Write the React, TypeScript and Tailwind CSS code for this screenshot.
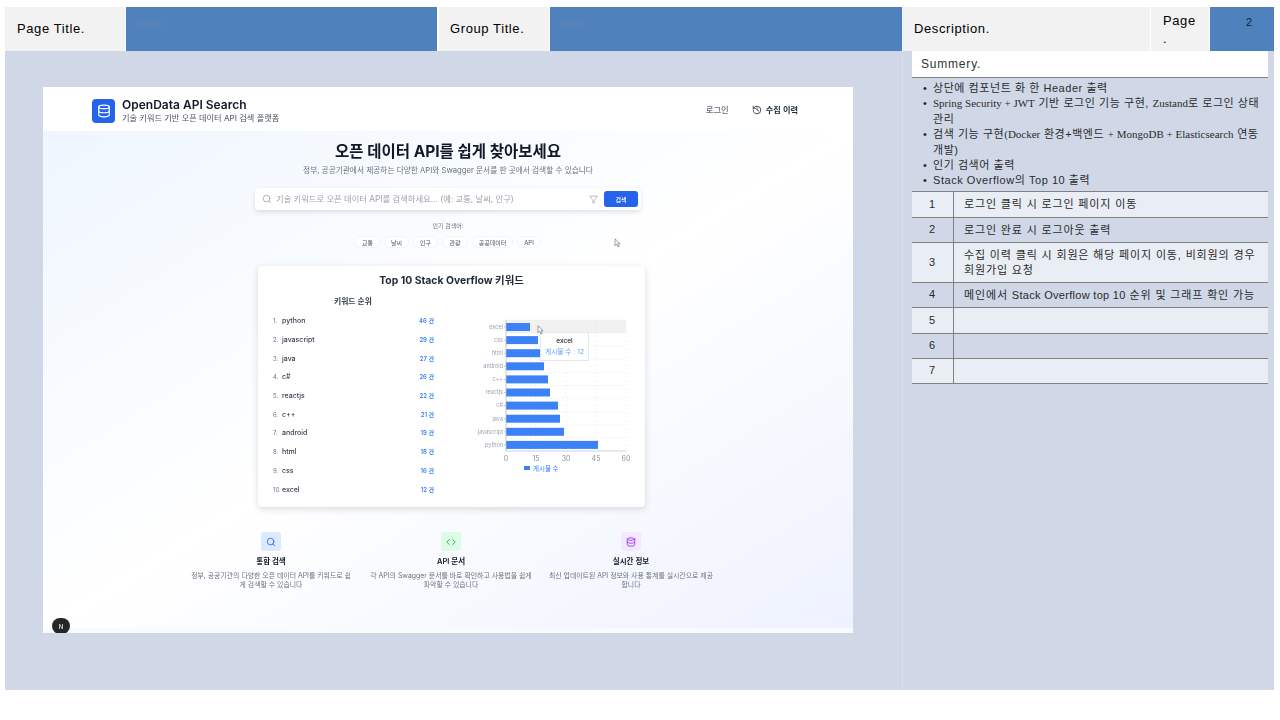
import { Database, Code, Search, History, Filter } from "lucide-react";

const sans = "font-['Liberation_Sans','Noto_Sans_CJK_KR',sans-serif]";
const ui = "font-['Inter','Noto_Sans_CJK_KR',sans-serif]";
const serif = "font-['Liberation_Serif','Noto_Sans_CJK_KR',serif] tracking-normal";

const keywords = [
  { name: "python", count: 46 },
  { name: "javascript", count: 29 },
  { name: "java", count: 27 },
  { name: "c#", count: 26 },
  { name: "reactjs", count: 22 },
  { name: "c++", count: 21 },
  { name: "android", count: 19 },
  { name: "html", count: 18 },
  { name: "css", count: 16 },
  { name: "excel", count: 12 },
];

const chips = [
  { label: "교통", width: "w-[25px]" },
  { label: "날씨", width: "w-[25px]" },
  { label: "인구", width: "w-[25px]" },
  { label: "관광", width: "w-[26px]" },
  { label: "공공데이터", width: "w-[41px]" },
  { label: "API", width: "w-[24px]" },
];

const rows = [
  { no: 1, text: "로그인 클릭 시 로그인 페이지 이동", height: "h-[26px]", bg: "bg-[#e9edf4]" },
  { no: 2, text: "로그인 완료 시 로그아웃 출력", height: "h-[25px]", bg: "bg-[#d0d8e8]" },
  { no: 3, text: "수집 이력 클릭 시 회원은 해당 페이지 이동, 비회원의 경우 회원가입 요청", height: "h-[40px]", bg: "bg-[#e9edf4]" },
  {
    no: 4,
    text: (
      <>
        메인에서 <span className="tracking-[0.3px]">Stack Overflow top 10</span> 순위 및 그래프 확인 가능
      </>
    ),
    height: "h-[25px]",
    bg: "bg-[#d0d8e8]",
  },
  { no: 5, text: "", height: "h-[26px]", bg: "bg-[#e9edf4]" },
  { no: 6, text: "", height: "h-[25px]", bg: "bg-[#d0d8e8]" },
  { no: 7, text: "", height: "h-[25px]", bg: "bg-[#e9edf4]" },
];

function Cursor({ className }: { className: string }) {
  return (
    <svg viewBox="0 0 8 12" className={className}>
      <path d="M1 1 L1 9.2 L3 7.4 L4.6 10.8 L6 10.1 L4.5 6.9 L7.2 6.8 Z" fill="white" stroke="#6b7280" strokeWidth="0.8" strokeLinejoin="round" />
    </svg>
  );
}

function StackChart() {
  const left = 36;
  const top = 4;
  const band = 13.1;
  const bars = [...keywords].reverse();
  return (
    <svg width="172" height="164" viewBox="0 0 172 164" className="block">
      <rect x={left} y={top} width="120" height={band} fill="#f1f1f1" />
      {[0, 15, 30, 45, 60].map((tick) => (
        <line key={tick} x1={left + tick * 2} x2={left + tick * 2} y1={top} y2={top + 131} stroke="#e5e7eb" strokeWidth="0.6" strokeDasharray="2 2" />
      ))}
      {bars.map((bar, i) => (
        <line key={bar.name} x1={left} x2={left + 120} y1={top + i * band} y2={top + i * band} stroke="#e5e7eb" strokeWidth="0.6" strokeDasharray="2 2" />
      ))}
      {bars.map((bar, i) => (
        <g key={bar.name}>
          <rect x={left} y={top + i * band + 3} width={bar.count * 2} height="8" fill="#3b82f6" />
          <line x1={left - 2} x2={left} y1={top + i * band + 7} y2={top + i * band + 7} stroke="#9ca3af" strokeWidth="0.6" />
          <text x={left - 3} y={top + i * band + 8.8} textAnchor="end" fontSize="5.5" fill="#9ca3af" fontFamily="Inter">
            {bar.name}
          </text>
        </g>
      ))}
      <line x1={left} x2={left} y1={top} y2={top + 131} stroke="#b8bdc6" strokeWidth="0.7" />
      <line x1={left} x2={left + 120} y1={top + 131} y2={top + 131} stroke="#b8bdc6" strokeWidth="0.7" />
      {[0, 15, 30, 45, 60].map((tick) => (
        <text key={tick} x={left + tick * 2} y={top + 140.5} textAnchor="middle" fontSize="7" fill="#8b919b" fontFamily="Inter">
          {tick}
        </text>
      ))}
      <rect x={54} y={150} width="6" height="4" fill="#3b82f6" />
      <text x={63} y={154.5} fontSize="6.5" fill="#3b82f6" fontFamily="Noto Sans CJK KR">
        게시물 수
      </text>
    </svg>
  );
}

function Screenshot() {
  return (
    <div className={`relative flex h-[546px] w-[810px] flex-col overflow-hidden blur-[0.6px] ${ui}`}>
      {/* App header */}
      <div className="flex h-[44px] shrink-0 items-center bg-white pl-[49px] pr-[55px] pt-[4px]">
        <div className="flex h-[24px] w-[23px] items-center justify-center rounded-[4px] bg-[#2563eb]">
          <Database className="h-[14px] w-[14px] text-white" strokeWidth={2} />
        </div>
        <div className="ml-[7px] mb-[1px]">
          <p className="text-[12px] font-semibold leading-[15px] text-[#111827]">OpenData API Search</p>
          <p className="text-[8.2px] leading-[12px] text-[#4b5563]">기술 키워드 기반 오픈 데이터 API 검색 플랫폼</p>
        </div>
        <span className="ml-auto mb-[2px] text-[8.4px] font-medium text-[#6b7280]">로그인</span>
        <History className="mb-[2px] ml-[23px] h-[10px] w-[10px] text-[#1f2937]" />
        <span className="mb-[2px] ml-[4px] text-[8.2px] font-semibold text-[#1f2937]">수집 이력</span>
      </div>

      <div className="flex flex-1 flex-col items-center bg-gradient-to-br from-[#eff6ff] via-white to-[#eef2ff]">
        {/* Hero */}
        <h1 className="mt-[11px] text-[15.5px] font-bold leading-[20px] text-[#111827]">오픈 데이터 API를 쉽게 찾아보세요</h1>
        <p className="mt-[2px] text-[7.7px] leading-[14px] text-[#6b7280]">
          정부, 공공기관에서 제공하는 다양한 API와 Swagger 문서를 한 곳에서 검색할 수 있습니다
        </p>
        <div className="mt-[10px] flex h-[22px] w-[386px] items-center rounded-[4px] bg-white pl-[7px] pr-[3px] shadow-[0_2px_5px_rgba(0,0,0,0.12)]">
          <Search className="h-[10px] w-[10px] text-[#9ca3af]" />
          <span className="ml-[4px] text-[8.3px] text-[#9ca3af]">기술 키워드로 오픈 데이터 API를 검색하세요... (예: 교통, 날씨, 인구)</span>
          <Filter className="ml-auto h-[9px] w-[9px] text-[#9ca3af]" />
          <button className="ml-[6px] h-[16px] w-[34px] rounded-[3px] bg-[#2563eb] text-[6px] font-medium text-white">검색</button>
        </div>
        <p className="mt-[12px] text-[6px] leading-[8px] text-[#6b7280]">인기 검색어:</p>
        <div className="mt-[6px] flex h-[12px] gap-[4px]">
          {chips.map((chip) => (
            <span key={chip.label} className={`flex items-center justify-center rounded-full border border-[#f3f4f6] bg-white text-[6px] text-[#4b5563] ${chip.width}`}>
              {chip.label}
            </span>
          ))}
        </div>

        {/* Top 10 card */}
        <div className="ml-[7px] mt-[18px] h-[241px] w-[387px] rounded-[4px] bg-white pt-[8px] shadow-[0_2px_7px_rgba(0,0,0,0.14)]">
          <h2 className="text-center text-[10.4px] font-bold leading-[14px] text-[#1f2937]">Top 10 Stack Overflow 키워드</h2>
          <div className="flex">
            <div className="ml-[15px] w-[161px]">
              <p className="mt-[7px] pl-[61px] text-[7.8px] font-semibold leading-[12px] text-[#374151]">키워드 순위</p>
              <ul className="mt-[5px]">
                {keywords.map((item, i) => (
                  <li key={item.name} className="flex h-[18.7px] items-center text-[7px] leading-[10px]">
                    <span className="w-[9px] text-[6px] leading-[10px] text-[#6b7280]">{i + 1}.</span>
                    <span className="font-medium text-[#374151]">{item.name}</span>
                    <span className="ml-auto text-[6px] font-semibold leading-[10px] text-[#3b82f6]">{item.count} 건</span>
                  </li>
                ))}
              </ul>
            </div>
            <div className="relative ml-[36px] mt-[28px]">
              <StackChart />
              <div className="absolute left-[70px] top-[16px] flex h-[29px] w-[49px] flex-col items-center justify-center border border-[#e5e7eb] bg-white">
                <span className="text-[6.5px] font-medium leading-[11px] text-[#111827]">excel</span>
                <span className="text-[6.7px] leading-[11px] text-[#60a5fa]">게시물 수 : 12</span>
              </div>
              <Cursor className="absolute left-[67px] top-[9px] h-[10px] w-[7px]" />
            </div>
          </div>
        </div>

        {/* Feature columns */}
        <div className="ml-[6px] mt-[25px] flex w-[540px]">
          <Feature tone="bg-[#dbeafe] text-[#2563eb]" title="통합 검색" text="정부, 공공기관의 다양한 오픈 데이터 API를 키워드로 쉽게 검색할 수 있습니다" icon={<Search className="h-[10px] w-[10px]" />} />
          <Feature tone="bg-[#dcfce7] text-[#16a34a]" title="API 문서" text="각 API의 Swagger 문서를 바로 확인하고 사용법을 쉽게 파악할 수 있습니다" icon={<Code className="h-[10px] w-[10px]" />} />
          <Feature tone="bg-[#f3e8ff] text-[#9333ea]" title="실시간 정보" text="최신 업데이트된 API 정보와 사용 통계를 실시간으로 제공합니다" icon={<Database className="h-[10px] w-[10px]" />} />
        </div>

        <div className="mt-auto h-[5px] w-full bg-[#f9fafb]" />
      </div>

      <div className="absolute bottom-[-1px] left-[9px] flex h-[16px] w-[18px] items-center justify-center rounded-full bg-[#262626] text-[6px] font-semibold text-[#d1d5db]">
        N
      </div>
      <Cursor className="absolute left-[571px] top-[151px] h-[10px] w-[7px]" />
    </div>
  );
}

function Feature({ tone, title, text, icon }: { tone: string; title: string; text: string; icon: React.ReactNode }) {
  return (
    <div className="flex w-[180px] flex-col items-center">
      <div className={`flex h-[19px] w-[20px] items-center justify-center rounded-[3px] ${tone}`}>{icon}</div>
      <p className="mt-[6px] text-[7.5px] font-semibold leading-[10px] text-[#111827]">{title}</p>
      <p className="mt-[4px] w-[166px] text-center text-[6.9px] leading-[9px] text-[#6b7280]">{text}</p>
    </div>
  );
}

function SummaryLine({ children }: { children: React.ReactNode }) {
  return (
    <li className="flex">
      <span className="w-[11px] shrink-0 pl-[1px]">•</span>
      <span>{children}</span>
    </li>
  );
}

export default function App() {
  return (
    <div className={`h-[720px] w-[1280px] overflow-hidden bg-white pl-[5px] pt-[7px] text-[#2b2b2b] ${sans}`}>
      {/* Title bar */}
      <div className="flex h-[44px] w-[1269px] text-[13px] tracking-[0.6px] text-black">
        <div className="flex w-[120px] items-center bg-[#f2f2f2] pl-[12px]">Page Title.</div>
        <div className="ml-[1px] w-[311px] bg-[#4f81bd] pl-[10px] pt-[9px] text-[11px] leading-[14px] text-[#6684ad]">main</div>
        <div className="ml-[2px] flex w-[110px] items-center bg-[#f2f2f2] pl-[11px]">Group Title.</div>
        <div className="ml-[1px] w-[352px] bg-[#4f81bd] pl-[8px] pt-[9px] text-[11px] leading-[14px] text-[#6684ad]">main</div>
        <div className="flex w-[248px] items-center bg-[#f2f2f2] pl-[12px]">Description.</div>
        <div className="ml-[1px] w-[58px] bg-[#f2f2f2] pl-[12px] pr-[16px] pt-[5px] leading-[18px]">Page .</div>
        <div className="ml-[1px] flex-1 bg-[#4f81bd] pl-[36px] pt-[7px] text-[11px] leading-[16px] text-[#10233f]">2</div>
      </div>

      <div className="flex h-[639px] w-[1269px] bg-[#d0d8e8]">
        {/* Captured screen */}
        <div className="w-[897px] shrink-0 pl-[38px] pt-[36px]">
          <Screenshot />
        </div>

        {/* Description panel */}
        <div className="flex-1 border-l border-[#dbe1ec] pl-[9px] pr-[6px]">
          <div className="flex h-[26px] items-center bg-white pl-[9px] text-[12px] tracking-[0.8px] text-[#333333]">Summery.</div>
          <ul className="border-t border-[#808080] pb-[2px] pl-[10px] pt-[3px] text-[11px] leading-[15.4px] tracking-[0.55px]">
            <SummaryLine>상단에 컴포넌트 화 한 Header 출력</SummaryLine>
            <SummaryLine>
              <span className={serif}>Spring Security + JWT</span> 기반 로그인 기능 구현, <span className={serif}>Zustand</span>로 로그인 상태 관리
            </SummaryLine>
            <SummaryLine>
              검색 기능 구현<span className={serif}>(Docker</span> 환경+백엔드 <span className={serif}>+ MongoDB + Elasticsearch</span> 연동 개발)
            </SummaryLine>
            <SummaryLine>인기 검색어 출력</SummaryLine>
            <SummaryLine>Stack Overflow의 Top 10 출력</SummaryLine>
          </ul>
          <div className="border-b border-[#808080]">
            {rows.map((row) => (
              <div key={row.no} className={`flex border-t border-[#808080] text-[11px] leading-[15px] tracking-[0.85px] ${row.height} ${row.bg}`}>
                <div className="flex w-[42px] items-center justify-center border-r border-[#808080]">{row.no}</div>
                <div className="flex-1 self-center break-keep pl-[10px] pr-[3px] pt-[1px]">{row.text}</div>
              </div>
            ))}
          </div>
        </div>
      </div>
    </div>
  );
}
